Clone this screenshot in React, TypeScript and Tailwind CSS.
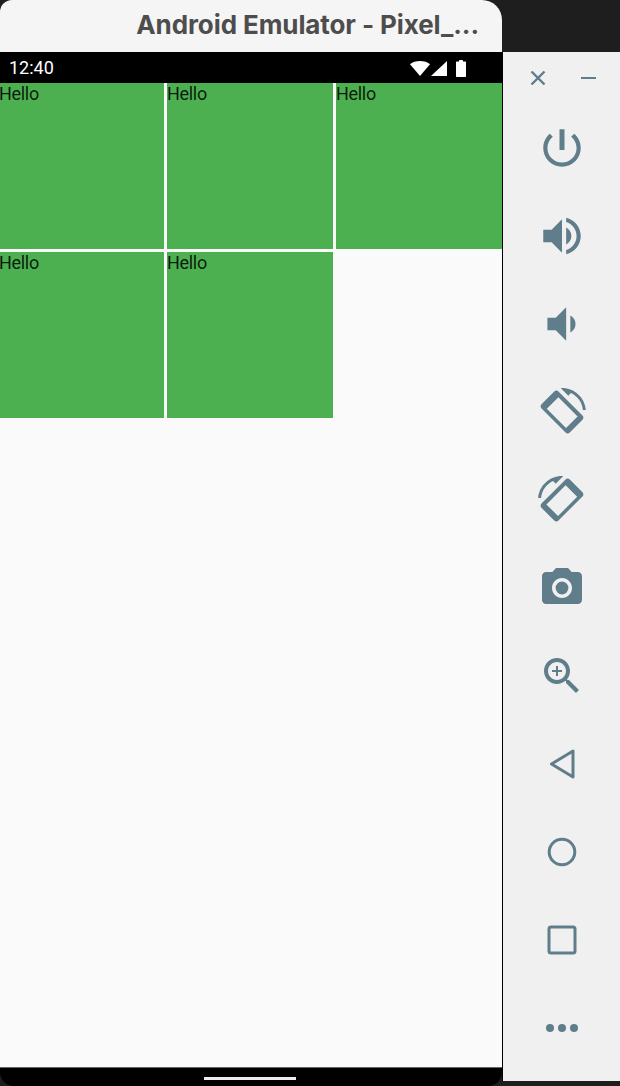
const cells = ["Hello", "Hello", "Hello", "Hello", "Hello"];

const iconClass = "h-[48px] w-[48px] fill-[#607d8b]";
const bigIconClass = "h-[50px] w-[50px] fill-[#607d8b]";

// phone body with thick ends, plus the one rotation arrow
const rotatePath =
  "M16.48 2.52c3.27 1.55 5.61 4.72 5.97 8.48h1.5C23.44 4.84 18.29 0 12 0l-.66.03 3.81 3.81 1.33-1.32zM10.23 1.75c-.59-.59-1.54-.59-2.12 0L1.75 8.11c-.59.59-.59 1.54 0 2.12l12.02 12.02c.59.59 1.54.59 2.12 0l6.36-6.36c.59-.59.59-1.54 0-2.12L10.23 1.75zM10.2 4.6l9.6 9.6-5.8 5.8-9.6-9.6z";

function StatusIcons() {
  return (
    <div className="flex items-center">
      <svg viewBox="0 0 20 15" className="h-[15px] w-[20px] fill-white">
        <path d="M10 15 0 3.2C2.6 1.2 6.100 0 10 0s7.400 1.200 10 3.200z" />
      </svg>
      <svg viewBox="0 0 16 15" className="ml-[1px] h-[15px] w-[16px] fill-white">
        <path d="M16 0v15H0z" />
      </svg>
      <svg viewBox="0 0 10 17" className="ml-[9px] h-[17px] w-[10px] fill-white">
        <path d="M3 1.500V1c0-.500.400-1 1-1h2c.600 0 1 .500 1 1v.500h2c.600 0 1 .400 1 1V16c0 .600-.400 1-1 1H1c-.600 0-1-.400-1-1V2.500c0-.600.400-1 1-1z" />
      </svg>
    </div>
  );
}

function SideIcons() {
  return (
    <>
      <svg viewBox="0 0 24 24" className={bigIconClass}>
        <path d="M13.200 3h-2.400v10h2.400V3zm4.630 2.170l-1.420 1.420C17.990 7.860 19 9.810 19 12c0 3.870-3.130 7-7 7s-7-3.130-7-7c0-2.190 1.010-4.140 2.580-5.420L6.170 5.170C4.230 6.820 3 9.260 3 12c0 4.970 4.030 9 9 9s9-4.030 9-9c0-2.740-1.230-5.180-3.170-6.830z" />
      </svg>
      <svg viewBox="0 0 24 24" className={bigIconClass}>
        <path d="M3 9v6h4l5 5V4L7 9H3zm13.500 3c0-1.770-1.020-3.290-2.500-4.030v8.050c1.480-.730 2.500-2.250 2.500-4.020zM14 3.230v2.060c2.890.860 5 3.540 5 6.710s-2.110 5.850-5 6.710v2.060c4.010-.910 7-4.490 7-8.770s-2.990-7.860-7-8.770z" />
      </svg>
      <svg viewBox="0 0 24 24" className={bigIconClass}>
        <path d="M18.500 12c0-1.770-1.020-3.290-2.500-4.030v8.050c1.480-.730 2.500-2.250 2.500-4.020zM5 9v6h4l5 5V4L9 9H5z" />
      </svg>
      <svg viewBox="0 0 24 24" className={iconClass}>
        <path d={rotatePath} fillRule="evenodd" />
      </svg>
      <svg viewBox="0 0 24 24" className={`${iconClass} -scale-x-100`}>
        <path d={rotatePath} fillRule="evenodd" />
      </svg>
      <svg viewBox="0 0 24 24" className={iconClass}>
        <circle cx="12" cy="12" r="3.200" />
        <path d="M9 2L7.170 4H4c-1.100 0-2 .900-2 2v12c0 1.100.900 2 2 2h16c1.100 0 2-.900 2-2V6c0-1.100-.900-2-2-2h-3.170L15 2H9zm3 15c-2.760 0-5-2.240-5-5s2.240-5 5-5 5 2.240 5 5-2.240 5-5 5z" />
      </svg>
      <svg viewBox="0 0 24 24" className={iconClass}>
        <path d="M15.500 14h-.790l-.280-.270C15.410 12.590 16 11.110 16 9.500 16 5.910 13.090 3 9.500 3S3 5.910 3 9.500 5.910 16 9.500 16c1.610 0 3.090-.590 4.230-1.570l.270.280v.790l5 4.990L20.490 19l-4.990-5zm-6 0C7.010 14 5 11.990 5 9.500S7.010 5 9.500 5 14 7.010 14 9.500 11.990 14 9.500 14z" />
        <path d="M12 10h-2v2H9v-2H7V9h2V7h1v2h2v1z" />
      </svg>
      <svg viewBox="0 0 48 48" className="h-[48px] w-[48px] fill-none stroke-[#607d8b] stroke-[3]">
        <path d="M13.500 24 35 11v26z" strokeLinejoin="round" />
      </svg>
      <svg viewBox="0 0 48 48" className="h-[48px] w-[48px] fill-none stroke-[#607d8b] stroke-[3]">
        <circle cx="24" cy="24" r="12.800" />
      </svg>
      <svg viewBox="0 0 48 48" className="h-[48px] w-[48px] fill-none stroke-[#607d8b] stroke-[3]">
        <rect x="11" y="11" width="26" height="26" rx="2" />
      </svg>
      <svg viewBox="0 0 48 48" className="h-[48px] w-[48px] fill-[#607d8b]">
        <circle cx="12" cy="24" r="4" />
        <circle cx="24" cy="24" r="4" />
        <circle cx="36" cy="24" r="4" />
      </svg>
    </>
  );
}

export default function App() {
  return (
    <div className="flex h-[1086px] w-[620px] overflow-hidden bg-[#1e1e1e] font-['Roboto',sans-serif]">
      <div className="flex w-[502px] flex-col">
        <div className="flex h-[52px] items-center justify-end rounded-tl-[12px] rounded-tr-[20px] bg-[#f6f5f6] pr-[23px] pb-[3px]">
          <span className="font-['Inter',sans-serif] text-[26px] font-bold tracking-[-0.1px] whitespace-nowrap text-[#4d4d4d]">
            Android Emulator - Pixel_...
          </span>
        </div>

        <div className="flex h-[31px] items-center justify-between bg-black pt-[1px] pr-[36px] pl-[9px]">
          <span className="text-[18px] leading-[24px] text-white">12:40</span>
          <StatusIcons />
        </div>

        <div className="flex-1 bg-[#fafafa]">
          <div className="grid auto-rows-[166px] grid-cols-[164px_166px_166px] gap-[3px]">
            {cells.map((label, i) => (
              <div
                key={i}
                className={`bg-[#4caf50] text-[18px] leading-[21px] tracking-[-0.3px] text-black/85 ${i % 3 === 0 ? "-indent-px" : ""}`}
              >
                {label}
              </div>
            ))}
          </div>
        </div>

        <div className="flex h-[19px] items-end justify-center rounded-b-[14px] border-t border-[#666] bg-black pb-[6px]">
          <div className="mr-[2px] h-[3px] w-[92px] bg-[#eeeeee]" />
        </div>
      </div>

      <div className="flex flex-1 flex-col pt-[52px] pb-[5px]">
        <div className="flex-1 border-l border-black bg-[#f0f0f0]">
          <div className="flex h-[52px] items-center justify-between pr-[24px] pl-[27px]">
            <svg viewBox="0 0 16 16" className="h-[16px] w-[16px] stroke-[#607d8b] stroke-[2.4]">
              <path d="M1.500 1.500l13 13M14.500 1.500l-13 13" />
            </svg>
            <div className="h-[2.5px] w-[15px] bg-[#607d8b]" />
          </div>
          <div className="grid auto-rows-[88px] place-items-center">
            <SideIcons />
          </div>
        </div>
      </div>
    </div>
  );
}
